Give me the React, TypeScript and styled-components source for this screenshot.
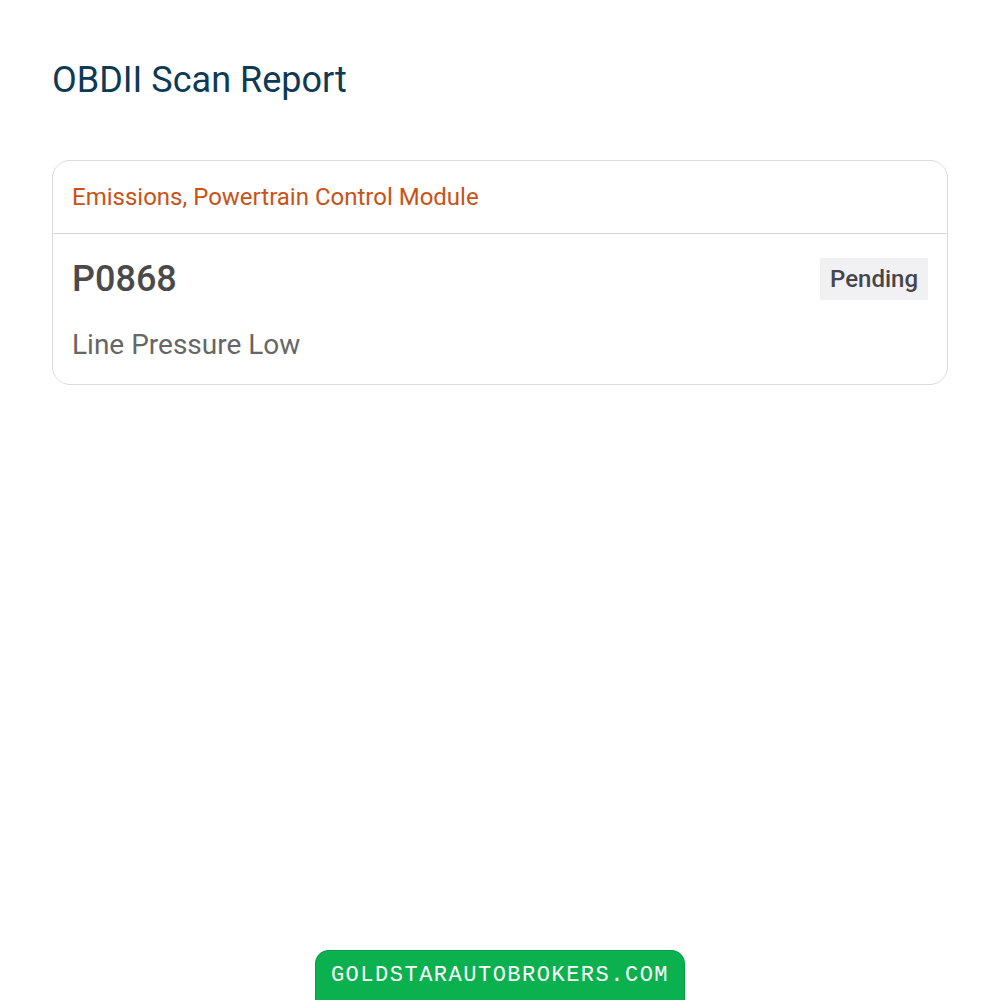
import styled, { createGlobalStyle } from "styled-components";

const GlobalStyle = createGlobalStyle`
	html, body {
		margin: 0;
		padding: 0;
		background: #ffffff;
		font-family: Roboto, "Noto Sans", Arial, sans-serif;
	}
`;

const Page = styled.main`
	min-height: 1000px;
	box-sizing: border-box;
	padding: 56px 52px 0;
`;

const Title = styled.h1`
	margin: 0 0 56px;
	font-size: 36px;
	line-height: 48px;
	font-weight: 400;
	color: #0d3a55;
`;

const Card = styled.section`
	border: 1px solid #dcdcdc;
	border-radius: 18px;
	overflow: hidden;
`;

const CardHeader = styled.header`
	padding: 0 19px;
	height: 72px;
	display: flex;
	align-items: center;
	border-bottom: 1px solid #d6d6d6;
	font-size: 24px;
	color: #c95216;
`;

const CardBody = styled.div`
	padding: 24px 19px 22px;
	display: flex;
	flex-direction: column;
	gap: 28px;
`;

const CodeRow = styled.div`
	display: flex;
	justify-content: space-between;
	align-items: center;
	height: 42px;
`;

const Code = styled.span`
	font-size: 36px;
	line-height: 42px;
	font-weight: 500;
	color: #4a4a4a;
`;

const Status = styled.span`
	background: #f1f1f4;
	color: #45454c;
	font-size: 24px;
	font-weight: 500;
	padding: 8px 10px;
	line-height: 26px;
`;

const Description = styled.p`
	margin: 0;
	font-size: 28px;
	line-height: 34px;
	color: #666666;
`;

const SiteBadge = styled.a`
	position: fixed;
	left: 50%;
	bottom: 0;
	transform: translateX(-50%);
	width: 370px;
	height: 50px;
	box-sizing: border-box;
	display: flex;
	align-items: center;
	justify-content: center;
	background: #0bb14e;
	border: 1px solid #0a9a44;
	border-bottom: none;
	border-radius: 14px 14px 0 0;
	color: #ffffff;
	font-family: "Liberation Mono", "Courier New", monospace;
	font-size: 22px;
	letter-spacing: 1.5px;
	text-decoration: none;
`;

const App = () => {
	return (
		<>
			<GlobalStyle />
			<Page>
				<Title>OBDII Scan Report</Title>
				<Card>
					<CardHeader>Emissions, Powertrain Control Module</CardHeader>
					<CardBody>
						<CodeRow>
							<Code>P0868</Code>
							<Status>Pending</Status>
						</CodeRow>
						<Description>Line Pressure Low</Description>
					</CardBody>
				</Card>
			</Page>
			<SiteBadge href="#">GOLDSTARAUTOBROKERS.COM</SiteBadge>
		</>
	);
};

export default App;
